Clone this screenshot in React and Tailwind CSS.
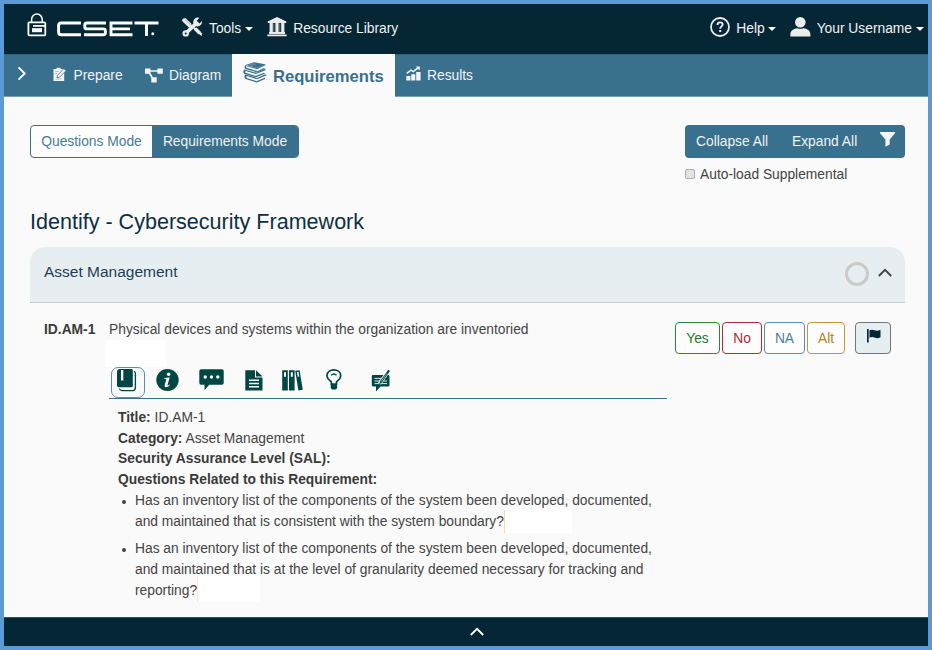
import React from 'react';

const Lock = () => (
  <svg className="block shrink-0" width="20" height="24" viewBox="0 0 20 24" fill="none" stroke="#fff">
    <path d="M4.6 9V6.4a5.3 5.3 0 0 1 10.6 0V9" strokeWidth="1.5" />
    <path d="M18.3 12V10.3Q18.3 9.3 17.3 9.3H2.4Q1.4 9.3 1.4 10.3V21.5Q1.4 22.4 2.4 22.4H17.3Q18.3 22.4 18.3 21.4V12.9H6" strokeWidth="1.8" />
    <path d="M15 15.2H5V19.2H15z" fill="#fff" stroke="none" />
  </svg>
);

const Wordmark = () => (
  <svg className="block shrink-0" width="102" height="16" viewBox="0 0 102 16" fill="none" stroke="#fff" strokeWidth="2.9" role="img" aria-label="CSET">
    <path d="M24 2H4.2Q1.6 2 1.6 4.5V11.2Q1.6 13.7 4.2 13.7H24" />
    <path d="M49 2H29.8Q27.8 2 27.8 4V6Q27.8 7.9 29.8 7.9H46.4Q48.4 7.9 48.4 9.9V11.7Q48.4 13.7 46.4 13.7H27" />
    <path d="M75.5 2H54V13.7H75.5M54 7.9H73" />
    <path d="M77.5 2H101.5M89.5 2V15" />
    <circle cx="95.8" cy="12.8" r="1.5" fill="#fff" stroke="none" />
  </svg>
);

const Tools = () => (
  <svg className="block shrink-0" width="21" height="20" viewBox="0 0 21 20">
    <path d="M1 3.2 3.3 1 9.2 6.6 9 9.2 17.6 17.6 20 19.2 19.2 16.8 11 8.8 8.7 9.5 6.7 9z" fill="#ececec" />
    <path d="M2.2 3.3 8 8.9" stroke="#ececec" strokeWidth="4" strokeLinecap="round" />
    <path d="M3 2.6 8.6 8" stroke="#8b9aa2" strokeWidth=".7" />
    <path d="M15.8 4.8 4.1 16" stroke="#ececec" strokeWidth="3.7" />
    <circle cx="15.6" cy="5" r="4.4" fill="#ececec" />
    <path d="m14.7 3.8 3.5-3.7 3.1 2.3-3.7 4z" fill="#052635" />
    <circle cx="3.7" cy="16.4" r="3.2" fill="#ececec" />
    <circle cx="3.7" cy="16.4" r="1" fill="#052635" />
    <path d="M13 11.5 17.8 16.2" stroke="#ececec" strokeWidth="3.5" />
    <path d="m16.5 14.6 3.2 3" stroke="#ececec" strokeWidth="2" />
  </svg>
);

const Museum = () => (
  <svg className="block shrink-0" width="20" height="20" viewBox="0 0 20 20" fill="#ececec">
    <path d="M10 0 19.3 4.4V6H.7V4.4z M2.6 6h3.2v9H2.6zM8.4 6h3.2v9H8.4zM14.2 6h3.2v9h-3.2z M2 15h16v2H2z M.3 17.5h19.4V19.2H.3z" />
    <path d="M6.4 6.5h.9v8.5h-.9zM12.4 6.5h.9v8.5h-.9z" opacity=".5" />
  </svg>
);

const Help = () => (
  <svg className="block shrink-0" width="20" height="20" viewBox="0 0 20 20" fill="none" stroke="#ececec">
    <circle cx="10" cy="10" r="9" strokeWidth="1.8" />
    <path d="M7.5 7.9C7.5 6.3 8.5 5.4 10 5.4S12.6 6.3 12.6 7.6C12.6 9.4 10.2 9.4 10.2 11.7" strokeWidth="1.9" />
    <path d="M10.2 13v2" strokeWidth="2" />
  </svg>
);

const Person = () => (
  <svg className="block shrink-0" width="21" height="20" viewBox="0 0 21 20" fill="#ececec">
    <ellipse cx="10.3" cy="5.2" rx="5.3" ry="5.2" />
    <path d="M.4 19.6V17.5C.4 13.5 4 11.8 7 11.3Q10.3 12.3 13.6 11.3C17 11.8 20.4 13.5 20.4 17.5V19.6z" />
  </svg>
);

const Caret = () => (
  <svg className="block shrink-0" width="8" height="4" viewBox="0 0 8 4">
    <path d="M0 0h8L4 4z" fill="#fff" />
  </svg>
);

const Chevron = ({ className, color = '#fff' }) => (
  <svg className={className} width="14" height="9" viewBox="0 0 14 9" fill="none" stroke={color} strokeWidth="1.9">
    <path d="m.8 8 6.2-6.2L13.2 8" />
  </svg>
);

const PrepareIcon = () => (
  <svg className="block shrink-0" width="14" height="15" viewBox="0 0 14 15">
    <path d="M.5 2h3V.7h4V2h3.7v12H.5z" fill="#f4f4f4" />
    <path d="m4 11 .5-2.6L10.7 1.8l2.6 1.6-6.7 6.8z" fill="#f4f4f4" stroke="#38708e" strokeWidth=".8" />
    <path d="M2 4.5h4M2 6.5h2.5M2.5 12h6" stroke="#8babba" strokeWidth=".6" />
  </svg>
);

const DiagramIcon = () => (
  <svg className="block shrink-0" width="18" height="15" viewBox="0 0 18 15" fill="#f4f4f4">
    <path d="M0 .5h5.4v5.2H0zM12.4.5h5.4v5.2h-5.4zM6.3 9.3h5.4v5.2H6.3z" />
    <path d="M4 3h10M3.5 3.5 8 11" stroke="#f4f4f4" strokeWidth="1.6" />
  </svg>
);

const BooksIcon = () => (
  <svg className="block shrink-0" width="24" height="21" viewBox="0 0 24 21">
    <g fill="#38708e">
      <path d="M2.5 3 11 .2 22 2.3 14 5.8z" />
      <path d="M2.3 3.2Q.6 5 2.4 6.9L14 10.4V9L3.4 5.8Q2.7 4.8 3.5 4.1L14 7.2 22.3 3.2V2L14 5.7z" />
      <path d="M14.2 9.2 21.5 5.8V7L14.2 10.5z" />
      <path d="M1.4 7.6Q-.8 9.6 1.4 12L13 15.3V13.9L2.5 10.8Q1.8 9.8 2.7 9L13 12.1 23 8.1 21.8 7 13.6 10.8z" />
      <path d="m13 13.8 8.5-3.3v1.3L13 15.3z" />
      <path d="M2.2 12.6Q.4 14.8 2.7 17L14 20.6V19.2L3.8 15.9Q3 14.9 3.8 14.1L14 17.3 23.7 13.2 22 12.2 14 15.9z" />
      <path d="M14 19.1 22 15.6V16.9L14 20.6z" />
    </g>
    <path d="M6 3 11 1.4M8 3.8 13 2" stroke="#8eacba" strokeWidth=".5" />
  </svg>
);

const ResultsIcon = () => (
  <svg className="block shrink-0" width="15" height="15" viewBox="0 0 15 15">
    <path d="M.3 10h4.1v4.5H.3zM5.2 8.3h4.1v6.2H5.2zM10.2 6h4.4v8.5h-4.4z" fill="#f4f4f4" />
    <path d="m.7 7.4 4.4-3.2 2.2 1.4L12 1.8" fill="none" stroke="#f4f4f4" strokeWidth="1.6" />
    <path d="M9.8.5h4v4.1z" fill="#f4f4f4" />
  </svg>
);

const BookIcon = () => (
  <svg width="20" height="23" viewBox="0 0 20 23">
    <path d="M3 0H14.4Q15.8 0 15.8 1.3V16.9Q15.8 18.2 14.4 18.2H2Q0 18.2 0 16.2V2.8Q0 .3 3 0z" fill="#004744" />
    <path d="M4 1H6.3V12L5.1 11.1 4 12z" fill="#fafafa" />
    <path d="M2.4 19.6Q3 21.6 5.2 21.6H15.6Q18.4 21.6 18.4 18.8V4.4Q18.4 2.9 17 2.4" fill="none" stroke="#004744" strokeWidth="1.3" />
  </svg>
);

const InfoIcon = () => (
  <svg width="23" height="22" viewBox="0 0 23 22">
    <ellipse cx="11.5" cy="11" rx="11.2" ry="10.9" fill="#004744" />
    <ellipse cx="12.6" cy="5.2" rx="1.8" ry="1.7" fill="#fff" />
    <path d="M8.3 9.1 13.7 8.4 11.6 15.6Q11.3 16.8 12.2 16.4L13.5 15.4 14 16Q12 18.4 9.9 18.3 8.1 18 8.7 15.9L10.2 10.6Q10.5 9.7 8.3 9.9z" fill="#fff" />
  </svg>
);

const CommentIcon = () => (
  <svg width="25" height="22" viewBox="0 0 25 22">
    <path d="M2 .2h21Q24.7.2 24.7 2V14Q24.7 15.7 23 15.7H10.2L5.5 21.3V15.7H2Q.3 15.7.3 14V2Q.3.2 2 .2z" fill="#004744" />
    <g fill="#fff"><circle cx="6.2" cy="8" r="1.7" /><circle cx="12.5" cy="8" r="1.7" /><circle cx="18.8" cy="8" r="1.7" /></g>
  </svg>
);

const DocIcon = () => (
  <svg width="18" height="21" viewBox="0 0 18 21">
    <path d="M.3.3H10V7.5H17.5V20.5H.3z M11 .3 17.5 6.6H11z" fill="#004744" />
    <path d="M4 10.2h10M4 13.5h10M4 16.8h10" stroke="#fff" strokeWidth="1.4" />
  </svg>
);

const BindersIcon = () => (
  <svg width="21" height="21" viewBox="0 0 21 21">
    <path d="M.2.2h5.6v20.4H.2zM7 .2h5.6v20.4H7zM13.2.7 17.6.2 20.8 19.7 16.4 20.6z" fill="#004744" />
    <path d="M2 2.2h2v4.5H2zM8.8 2.2h2v4.5h-2zM14.9 2.1l1.6-.3.8 4.7-1.6.3z" fill="#fafafa" />
  </svg>
);

const BulbIcon = () => (
  <svg width="16" height="22" viewBox="0 0 16 22" fill="none" stroke="#004744">
    <path d="M5.3 15V12.8L2.3 10Q1 8.5 1 6.6C1 3.1 4 .9 7.8.9S14.7 3.1 14.7 6.6Q14.7 8.5 13.4 10L10.5 12.8V15z" strokeWidth="1.7" />
    <path d="M5.2 6.3Q7.8 3.7 10.5 6.3" strokeWidth="1.3" />
    <path d="M4.7 15h6.4v4L9.8 20.5H6L4.7 19z" fill="#004744" stroke="none" />
  </svg>
);

const FeedbackIcon = () => (
  <svg width="20" height="24" viewBox="0 0 20 24">
    <path d="M2 6h15.2Q18.5 6 18.5 7.3V16Q18.5 17.5 17 17.5H9.5L5 22.6V17.5H2.3Q.8 17.5.8 16V7.3Q.8 6 2 6z" fill="#004744" />
    <path d="M3.5 9.4h8M3.5 12h5.8M3.5 14.6h5M12.5 12H16M11 14.6h5" stroke="#fafafa" strokeWidth=".9" />
    <path d="M8.5 14.6 18.2 1" stroke="#fafafa" strokeWidth="3.6" />
    <path d="M8.2 15.4 9.1 12 17.3.8 19 2 10.8 13.5z" fill="#004744" />
    <path d="m10 12.6 6-8.3" stroke="#fafafa" strokeWidth=".5" />
  </svg>
);

const icons = [
  [InfoIcon, 'ml-[11px] mt-[2px]'],
  [CommentIcon, 'ml-[20px] mt-[2px]'],
  [DocIcon, 'ml-[21px] mt-[3px]'],
  [BindersIcon, 'ml-[19px] mt-[3px]'],
  [BulbIcon, 'ml-[23px] mt-[2px]'],
  [FeedbackIcon, 'ml-[29px] mt-[2px]'],
];

const answers = [
  ['Yes', 'w-[45px] border-[#2e8535] text-[#1c7c24]'],
  ['No', 'w-[40px] border-[#b02a37] text-[#b02a2f]'],
  ['NA', 'w-[41px] border-[#5c8dab] text-[#4a7f9f]'],
  ['Alt', 'w-[38px] border-[#c69436] text-[#b8811c]'],
];

export default function App() {
  return (
    <div className="flex h-[650px] w-[932px] flex-col overflow-hidden border-4 border-[#5b9bd5] bg-[#fafafa] font-['Liberation_Sans',Arial,sans-serif] text-[13.8px] leading-[20.7px] whitespace-nowrap text-[#444]">
      <header className="flex h-[50px] shrink-0 items-center bg-[#052635] text-[#f2f2f2]">
        <div className="mb-[9px] ml-[23px]"><Lock /></div>
        <div className="mt-[-1px] ml-[10px]"><Wordmark /></div>
        <div className="mb-[4px] ml-[23px]"><Tools /></div>
        <span className="mt-[1px] ml-[6px]">Tools</span>
        <div className="ml-[4px]"><Caret /></div>
        <div className="mb-[4px] ml-[14px]"><Museum /></div>
        <span className="mt-[1px] ml-[6px]">Resource Library</span>
        <div className="mb-[4px] ml-auto"><Help /></div>
        <span className="mt-[1px] ml-[6px]">Help</span>
        <div className="ml-[3px]"><Caret /></div>
        <div className="mb-[4px] ml-[14px]"><Person /></div>
        <span className="mt-[1px] ml-[6px]">Your Username</span>
        <div className="mr-[4px] ml-[4px]"><Caret /></div>
      </header>

      <nav className="flex h-[43px] shrink-0 items-center border-t border-b border-t-[#2e5f7a] border-b-[#75a0b5] bg-[#38708e] text-[#f4f4f4]">
        <Chevron className="mb-[4px] ml-[11px] rotate-90" />
        <div className="mb-[3px] ml-[24px]"><PrepareIcon /></div>
        <span className="mt-[2px] ml-[6.5px]">Prepare</span>
        <div className="ml-[22px]"><DiagramIcon /></div>
        <span className="mt-[2px] ml-[6.5px]">Diagram</span>
        <div className="ml-auto flex h-[43px] w-[163px] shrink-0 items-center bg-[#fafafa] text-[16.6px] font-bold text-[#38708e]">
          <div className="mb-[6px] ml-[11px]"><BooksIcon /></div>
          <span className="mt-[3px] ml-[6px]">Requirements</span>
        </div>
        <div className="flex w-[533px] shrink-0 items-center">
          <div className="mb-[4px] ml-[11px]"><ResultsIcon /></div>
          <span className="mt-[2px] ml-[6px]">Results</span>
        </div>
      </nav>

      <main className="flex flex-1 flex-col pr-[23px] pl-[26px]">
        <div className="mt-[28px] flex h-[60px] items-start justify-between">
          <div className="flex h-[33px] overflow-hidden rounded-[4px] border border-[#38708e] bg-[#fdfdfd] leading-[31px]">
            <span className="w-[121px] text-center text-[#457c99]">Questions Mode</span>
            <span className="w-[146px] bg-[#38708e] text-center text-[#f2f2f2]">Requirements Mode</span>
          </div>
          <div className="w-[220px]">
            <div className="flex h-[33px] rounded-[4px] bg-[#38708e] leading-[33px] text-[#f2f2f2]">
              <span className="w-[96px] pl-[11px]">Collapse All</span>
              <span className="w-[88px] pl-[11px]">Expand All</span>
              <svg className="mt-[7px] ml-[11px]" width="15" height="15" viewBox="0 0 15 15" fill="#f4f4f4"><path d="M0 0h15v1.2L9.7 7.6v5L5.4 14.8V7.6L0 1.2z" /></svg>
            </div>
            <div className="mt-[7px] flex items-center">
              <span className="mb-[3px] h-[10px] w-[10px] rounded-[2px] border border-[#adadad] bg-[#e3e3e3]" />
              <span className="ml-[5px]">Auto-load Supplemental</span>
            </div>
          </div>
        </div>

        <h1 className="mt-[20px] h-[42px] text-[21.55px] leading-[34px] text-[#0d2f42]">Identify - Cybersecurity Framework</h1>

        <section className="flex h-[56px] shrink-0 rounded-t-[15px] border-b border-[#cbcfd1] bg-[#e7eef2] pr-[13px] pl-[14px]">
          <span className="mt-[15px] text-[15.5px] text-[#1d4053]">Asset Management</span>
          <span className="mt-[15px] ml-auto h-[24px] w-[24px] rounded-full border-[3.5px] border-[#cacaca]" />
          <Chevron className="mt-[21px] ml-[9px]" color="#444" />
        </section>

        <div className="flex pl-[14px]">
          <strong className="mt-[17px] w-[65px] shrink-0 text-[#3b3b3b]">ID.AM-1</strong>
          <div className="w-[558px] shrink-0">
            <p className="mt-[17px] h-[20px]">Physical devices and systems within the organization are inventoried</p>
            <div className="ml-[-4px] h-[27px] w-[61px] bg-white" />
            <div className="flex h-[32px] items-start border-b border-[#38708e]">
              <div className="ml-[2px] flex h-[31px] w-[34px] shrink-0 items-start rounded-[7px] border border-[#5c8dab] pt-[1px] pl-[5px]">
                <BookIcon />
              </div>
              {icons.map(([Icon, place], i) => (
                <div key={i} className={`${place} shrink-0`}><Icon /></div>
              ))}
            </div>
            <div className="mt-[9px] pl-[9px]">
              <p><b className="text-[#3b3b3b]">Title:</b> ID.AM-1</p>
              <p><b className="text-[#3b3b3b]">Category:</b> Asset Management</p>
              <p><b className="text-[#3b3b3b]">Security Assurance Level (SAL):</b></p>
              <p><b className="text-[#3b3b3b]">Questions Related to this Requirement:</b></p>
              <ul className="list-none">
                <li className="flex">
                  <span className="mt-[9px] mr-[9px] ml-[4px] h-[4px] w-[4px] rounded-full bg-[#444]" />
                  <div>
                    <p>Has an inventory list of the components of the system been developed, documented,</p>
                    <p className="flex h-[20.7px]">and maintained that is consistent with the system boundary?<span className="mt-[-2px] h-[23px] w-[68px] border-l border-[#fbd9ae] bg-white" /></p>
                  </div>
                </li>
                <li className="mt-[6.9px] flex">
                  <span className="mt-[9px] mr-[9px] ml-[4px] h-[4px] w-[4px] rounded-full bg-[#444]" />
                  <div>
                    <p>Has an inventory list of the components of the system been developed, documented,</p>
                    <p>and maintained that is at the level of granularity deemed necessary for tracking and</p>
                    <p className="flex h-[20.7px]">reporting?<span className="mt-[-5px] h-[26px] w-[63px] border-l border-[#fbe6cb] bg-white" /></p>
                  </div>
                </li>
              </ul>
            </div>
          </div>
          <div className="mt-[19px] ml-[8px] flex h-[32px] gap-[2px] text-center leading-[32px]">
            {answers.map(([label, look]) => (
              <span key={label} className={`${look} shrink-0 rounded-[4px] border bg-[#fdfdfd]`}>{label}</span>
            ))}
            <span className="ml-[8px] w-[36px] shrink-0 rounded-[4px] border border-[#6f777c] bg-[#e7eef2] pt-[6px] pl-[11px]">
              <svg className="block" width="14" height="14" viewBox="0 0 14 14" fill="#052635"><path d="M0 0h1.7v13.5H0zM2.5 1.2Q5 .1 7.5 1.2 10 2.3 13.5.8V8.3Q10.5 9.8 8 8.7 5 7.5 2.5 8.8z" /></svg>
            </span>
          </div>
        </div>
      </main>

      <footer className="flex h-[29px] shrink-0 justify-center border-t border-[#344f5c] bg-[#052635] pl-[22px]">
        <Chevron className="mt-[9px]" />
      </footer>
    </div>
  );
}
